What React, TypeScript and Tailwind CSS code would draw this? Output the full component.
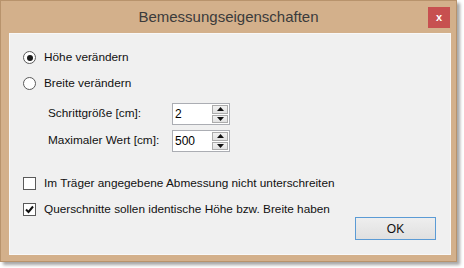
import React from "react";

function Radio({ checked, label }: { checked?: boolean; label: string }) {
  return (
    <div className="flex h-[13px] items-center">
      <span className="flex h-[13px] w-[13px] items-center justify-center rounded-full border border-[#5a5a5a] bg-white">
        {checked && <span className="h-[6px] w-[6px] rounded-full bg-[#1a1a1a]" />}
      </span>
      <span className="ml-[8px]">{label}</span>
    </div>
  );
}

function Check({ checked, label }: { checked?: boolean; label: string }) {
  return (
    <div className="flex h-[13px] items-center">
      <span className="flex h-[13px] w-[13px] items-center justify-center border border-[#5a5a5a] bg-white">
        {checked && (
          <svg width="9" height="9" viewBox="0 0 9 9">
            <path d="M1 4.5 L3.5 7 L8 1.5" fill="none" stroke="#111" strokeWidth="2" />
          </svg>
        )}
      </span>
      <span className="ml-[8px]">{label}</span>
    </div>
  );
}

function Spin({ value }: { value: string }) {
  return (
    <div className="flex h-[22px] w-[58px] border border-[#abadb3] bg-white">
      <span className="flex-1 pl-[2px] text-[12px] leading-[20px] text-black">{value}</span>
      <div className="flex w-[17px] flex-col gap-[1px] py-[1px] pr-[1px]">
        <div className="flex flex-1 items-center justify-center border border-[#acacac] bg-gradient-to-b from-[#f2f2f2] to-[#e2e2e2]">
          <svg width="7" height="4" viewBox="0 0 7 4">
            <path d="M0 4 L3.5 0 L7 4 Z" fill="#111" />
          </svg>
        </div>
        <div className="flex flex-1 items-center justify-center border border-[#acacac] bg-gradient-to-b from-[#f2f2f2] to-[#e2e2e2]">
          <svg width="7" height="4" viewBox="0 0 7 4">
            <path d="M0 0 L7 0 L3.5 4 Z" fill="#111" />
          </svg>
        </div>
      </div>
    </div>
  );
}

export default function App() {
  return (
    <div className="h-[268px] w-[464px] bg-white font-['Liberation_Sans',Arial,sans-serif] text-[11.8px] text-[#111]">
      <div className="relative h-[262px] w-[457px] border border-[#b8936c] bg-[#d3b08b] shadow-[3px_3px_3px_rgba(0,0,0,0.35)]">
        <div className="flex h-[32px] items-center justify-center text-[15px] text-[#3b3b3b]">
          Bemessungseigenschaften
        </div>
        <button className="absolute right-[6px] top-[6px] flex h-[21px] w-[22px] items-center justify-center bg-[#c75050] text-[11px] font-bold leading-none text-white">
          x
        </button>
        <div className="ml-[8px] flex h-[222px] w-[442px] flex-col border border-[#f8f8f8] bg-[#f0f0f0] pl-[13px] pt-[17px]">
          <Radio checked label="Höhe verändern" />
          <div className="mt-[13px]">
            <Radio label="Breite verändern" />
          </div>
          <div className="ml-[25px] mt-[13px] flex flex-col gap-[5px]">
            <div className="flex items-center">
              <span className="w-[124px]">Schrittgröße [cm]:</span>
              <Spin value="2" />
            </div>
            <div className="flex items-center">
              <span className="w-[124px]">Maximaler Wert [cm]:</span>
              <Spin value="500" />
            </div>
          </div>
          <div className="mt-[25px]">
            <Check label="Im Träger angegebene Abmessung nicht unterschreiten" />
          </div>
          <div className="mt-[13px]">
            <Check checked label="Querschnitte sollen identische Höhe bzw. Breite haben" />
          </div>
          <div className="mt-[1px] flex justify-end pr-[14px]">
            <button className="h-[23px] w-[81px] border border-[#5b9bd5] bg-gradient-to-b from-[#eeeeee] to-[#e0e0e0] text-[12px] text-[#111]">
              OK
            </button>
          </div>
        </div>
      </div>
    </div>
  );
}
